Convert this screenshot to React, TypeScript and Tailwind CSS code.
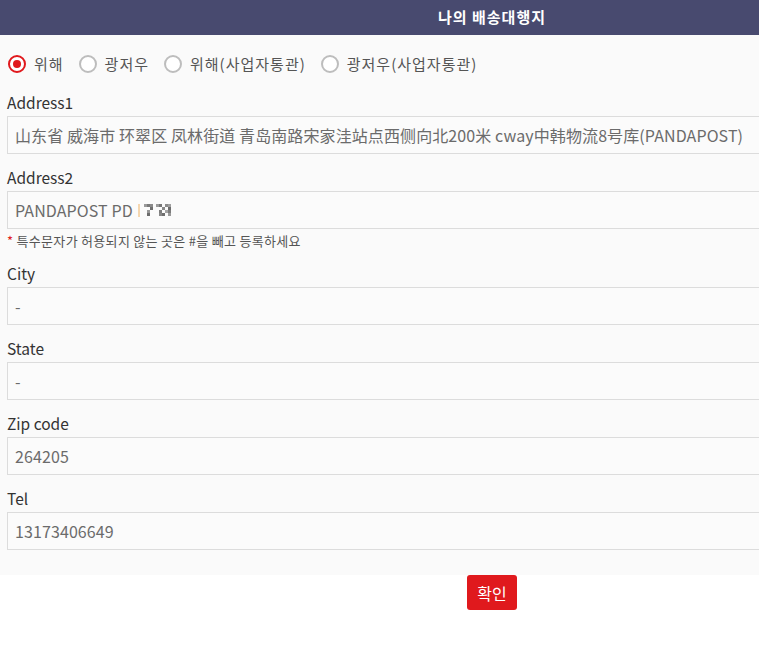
import React from "react";

const font = { fontFamily: '"Noto Sans CJK KR", "Noto Sans", sans-serif' };

function Radio({ checked, label }: { checked?: boolean; label: string }) {
  return (
    <label className="flex items-center gap-[8px]">
      {checked ? (
        <span className="flex h-[18px] w-[18px] items-center justify-center rounded-full border-2 border-[#e0191d] bg-white">
          <span className="h-[8px] w-[8px] rounded-full bg-[#e0191d]" />
        </span>
      ) : (
        <span className="h-[18px] w-[18px] rounded-full border-2 border-[#bdbdbd] bg-white" />
      )}
      <span className="text-[15px] tracking-[1px] text-[#555]">{label}</span>
    </label>
  );
}

function Field({
  label,
  value,
  first,
  children,
}: {
  label: string;
  value?: string;
  first?: boolean;
  children?: React.ReactNode;
}) {
  return (
    <div className={first ? "mt-[17px]" : "mt-[13px]"}>
      <div className="mb-[2px] flex h-[22px] items-center text-[15.5px] text-[#333]">{label}</div>
      <div className="flex h-[38px] items-center border border-[#dcdcdc] bg-[#fbfbfb] px-[7px] text-[16px] tracking-[0.1px] text-[#6b6b6b] whitespace-nowrap">
        {value}
        {children}
      </div>
    </div>
  );
}

function Mosaic() {
  const cells: [number, number, string][] = [
    [0, 0, "#9a9a9a"], [3, 0, "#7a7a7a"], [6, 0, "#8a8a8a"], [12, 0, "#9b9b9b"], [15, 0, "#777"], [21, 0, "#8c8c8c"], [24, 0, "#a0a0a0"],
    [6, 3, "#6f6f6f"], [18, 3, "#888"], [24, 3, "#6c6c6c"],
    [3, 6, "#999"], [15, 6, "#7d7d7d"], [21, 6, "#a5a5a5"], [24, 6, "#7c7c7c"],
    [3, 9, "#6c6c6c"], [15, 9, "#888"], [18, 9, "#6e6e6e"], [24, 9, "#9a9a9a"],
  ];
  return (
    <span className="ml-[5px] inline-flex items-center gap-[4px]">
      <span className="inline-block h-[13px] w-[2px] bg-[#f5d7b0]" />
      <svg width="28" height="12" viewBox="0 0 28 12">
        {cells.map(([x, y, c], i) => (
          <rect key={i} x={x} y={y} width="3" height="3" fill={c} />
        ))}
      </svg>
    </span>
  );
}

export default function App() {
  return (
    <div className="h-[646px] w-[759px] overflow-hidden bg-white" style={font}>
      <div className="w-[984px]">
        <div className="flex h-[35px] items-center justify-center bg-[#484a6f] text-[15px] font-bold tracking-[1px] text-white">
          나의 배송대행지
        </div>
        <div className="bg-[#fafafa] px-[7px] pt-[18px] pb-[25px]">
          <div className="flex h-[22px] items-center gap-[15px] pl-[1px]">
            <Radio checked label="위해" />
            <Radio label="광저우" />
            <Radio label="위해(사업자통관)" />
            <Radio label="광저우(사업자통관)" />
          </div>
          <Field
            first
            label="Address1"
            value="山东省 威海市 环翠区 凤林街道 青岛南路宋家洼站点西侧向北200米 cway中韩物流8号库(PANDAPOST)"
          />
          <Field label="Address2" value="PANDAPOST PD">
            <Mosaic />
          </Field>
          <div className="mt-[3px] h-[18px] text-[13px] leading-[18px] tracking-[0.3px] text-[#555]">
            <span className="text-[#e0191d]">*</span> 특수문자가 허용되지 않는 곳은 #을 빼고 등록하세요
          </div>
          <Field label="City" value="-" />
          <Field label="State" value="-" />
          <Field label="Zip code" value="264205" />
          <Field label="Tel" value="13173406649" />
        </div>
        <div className="flex justify-center">
          <button className="h-[35px] w-[50px] rounded-[3px] bg-[#e0191d] text-[16px] text-white">
            확인
          </button>
        </div>
      </div>
    </div>
  );
}
